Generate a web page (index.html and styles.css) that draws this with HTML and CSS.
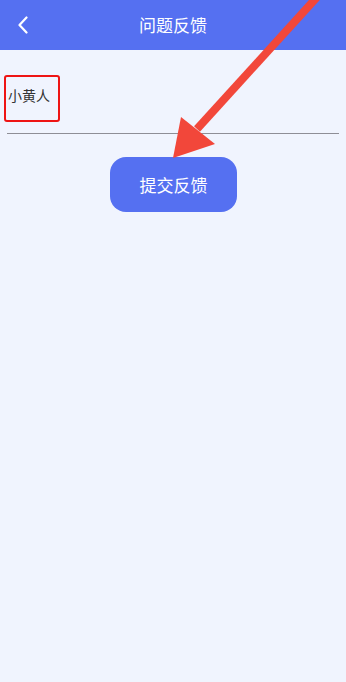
FILE: index.html
```html
<!DOCTYPE html>
<html lang="zh">
<head>
<meta charset="utf-8">
<link rel="stylesheet" href="styles.css">
</head>
<body>
<div class="page">
  <header class="bar">
    <span class="back">
      <svg width="12" height="18" viewBox="0 0 12 18"><path d="M9.5 1.5 L2.5 9 L9.5 16.5" fill="none" stroke="#fff" stroke-width="2.2" stroke-linecap="round" stroke-linejoin="round"/></svg>
    </span>
    <h1 class="title">问题反馈</h1>
    <span class="spacer"></span>
  </header>
  <main class="content">
    <div class="field">
      <span class="mark">小黄人</span>
    </div>
    <div class="rule"></div>
    <div class="actions">
      <button class="submit">提交反馈</button>
    </div>
  </main>
  <svg class="arrow" width="346" height="682" viewBox="0 0 346 682">
    <line x1="318" y1="-4" x2="197" y2="129" stroke="#F2473A" stroke-width="8"/>
    <polygon points="181,117 215,144 173,158" fill="#F2473A"/>
  </svg>
</div>
</body>
</html>
```
FILE: styles.css
```css
html, body {
  margin: 0;
  padding: 0;
}
body {
  background: #F0F4FE;
  font-family: "Noto Sans CJK SC", "Noto Sans", sans-serif;
}
.page {
  position: relative;
  width: 346px;
  height: 682px;
  overflow: hidden;
}
.bar {
  height: 50px;
  background: #5570F1;
  display: grid;
  grid-template-columns: 60px 1fr 60px;
  align-items: center;
}
.back {
  display: flex;
  align-items: center;
  padding-left: 17px;
}
.title {
  margin: 0;
  text-align: center;
  color: #fff;
  font-size: 17px;
  font-weight: 400;
  line-height: 50px;
}
.content {
  padding: 25px 7px 0 7px;
}
.field {
  height: 58px;
}
.mark {
  display: inline-block;
  box-sizing: border-box;
  margin-left: -3px;
  width: 56px;
  height: 47px;
  padding: 9px 0 0 2px;
  border: 2px solid #EE1414;
  border-radius: 3px;
  font-size: 14px;
  line-height: 18px;
  color: #333;
}
.rule {
  height: 1px;
  background: #8E8E96;
}
.actions {
  display: flex;
  justify-content: center;
  padding-top: 23px;
}
.submit {
  width: 127px;
  height: 55px;
  border: none;
  border-radius: 16px;
  background: #5570F1;
  color: #fff;
  font-family: "Noto Sans CJK SC", "Noto Sans", sans-serif;
  font-size: 17px;
  margin-left: 1px;
}
.arrow {
  position: absolute;
  left: 0;
  top: 0;
  pointer-events: none;
}
```
